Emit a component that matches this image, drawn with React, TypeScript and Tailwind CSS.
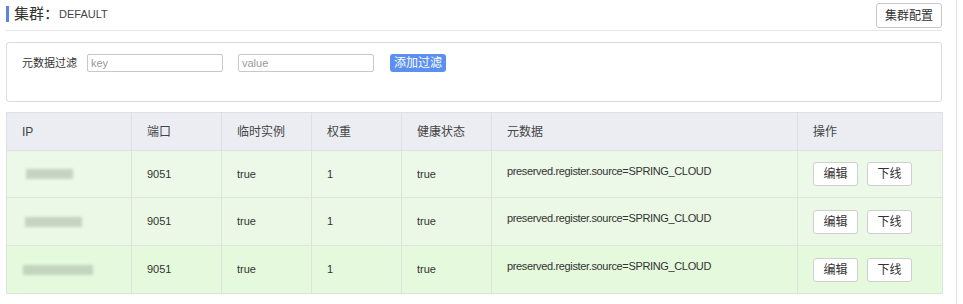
import React from "react";

const font = { fontFamily: '"Liberation Sans", "Noto Sans CJK SC", sans-serif' };

const cols = [
  { label: "IP", w: 125 },
  { label: "端口", w: 90 },
  { label: "临时实例", w: 90 },
  { label: "权重", w: 90 },
  { label: "健康状态", w: 90 },
  { label: "元数据", w: 306 },
  { label: "操作", w: 145 },
];

const rows = [
  { h: 47, bg: "bg-[#ecf8e8]", blur: 47, bx: 19 },
  { h: 48, bg: "bg-[#eaf8e5]", blur: 57, bx: 18 },
  { h: 48, bg: "bg-[#e5f9dc]", blur: 70, bx: 16 },
];

function Btn({ children }: { children: React.ReactNode }) {
  return (
    <button className="w-[45px] h-[24px] bg-white border border-[#cfcfcf] rounded-[3px] text-[12px] text-[#333] flex items-center justify-center">
      {children}
    </button>
  );
}

export default function App() {
  return (
    <div className="w-[963px] h-[304px] bg-white overflow-hidden" style={font}>
      <div className="w-[957px] h-[304px] border-r border-[#e3e3e3] pl-[6px]">
        <div className="w-[936px]">
          {/* header */}
          <div className="h-[31px] border-b border-[#e6e6e6] flex items-start justify-between">
            <div className="flex items-center mt-[6px]">
              <div className="w-[3px] h-[16px] bg-[#5b82e6]" />
              <span className="ml-[5px] text-[15px] text-[#333] leading-[16px]">集群：</span>
              <span className="text-[11px] text-[#444] leading-[16px]">DEFAULT</span>
            </div>
            <button className="mt-[3px] w-[66px] h-[25px] border border-[#c8c8c8] rounded-[3px] bg-white text-[12px] text-[#333] flex items-center justify-center">
              集群配置
            </button>
          </div>
          {/* filter card */}
          <div className="mt-[11px] h-[60px] border border-[#dcdcdc] rounded-[3px] pt-[11px] pl-[15px]">
            <div className="flex items-center h-[18px]">
              <span className="text-[11px] text-[#333] w-[65px]">元数据过滤</span>
              <input
                placeholder="key"
                className="w-[136px] h-[18px] border border-[#c8c8c8] rounded-[2px] px-[3px] text-[11px] text-[#333] placeholder:text-[#999] outline-none"
                style={font}
              />
              <input
                placeholder="value"
                className="ml-[15px] w-[136px] h-[18px] border border-[#c8c8c8] rounded-[2px] px-[3px] text-[11px] text-[#333] placeholder:text-[#999] outline-none"
                style={font}
              />
              <button className="ml-[16px] w-[56px] h-[18px] bg-[#5b8ff0] rounded-[3px] text-[12px] text-white flex items-center justify-center">
                添加过滤
              </button>
            </div>
          </div>
          {/* table */}
          <table className="mt-[10px] border-collapse text-[11px] text-[#333] table-fixed w-[937px]">
            <colgroup>
              {cols.map((c, i) => (
                <col key={i} style={{ width: c.w }} />
              ))}
            </colgroup>
            <thead>
              <tr className="h-[38px] bg-[#ebedf2]">
                {cols.map((c, i) => (
                  <th
                    key={i}
                    className="border border-[#dde0e6] text-left font-normal pl-[15px] text-[#444] text-[12px]"
                  >
                    {c.label}
                  </th>
                ))}
              </tr>
            </thead>
            <tbody>
              {rows.map((r, i) => (
                <tr key={i} className={r.bg} style={{ height: r.h }}>
                  <td className="border border-[#dbe5d8] pl-[15px]">
                    <div
                      className="h-[10px] bg-[#bccbb8] blur-[1.5px] opacity-80"
                      style={{ width: r.blur, marginLeft: r.bx - 15 }}
                    />
                  </td>
                  <td className="border border-[#dbe5d8] pl-[15px]">9051</td>
                  <td className="border border-[#dbe5d8] pl-[15px]">true</td>
                  <td className="border border-[#dbe5d8] pl-[15px]">1</td>
                  <td className="border border-[#dbe5d8] pl-[15px]">true</td>
                  <td className="border border-[#dbe5d8] pl-[15px] align-top pt-[13px] tracking-[-0.35px] leading-[14px]">
                    preserved.register.source=SPRING_CLOUD
                  </td>
                  <td className="border border-[#dbe5d8] pl-[15px]">
                    <div className="flex gap-[9px]">
                      <Btn>编辑</Btn>
                      <Btn>下线</Btn>
                    </div>
                  </td>
                </tr>
              ))}
            </tbody>
          </table>
        </div>
      </div>
    </div>
  );
}
